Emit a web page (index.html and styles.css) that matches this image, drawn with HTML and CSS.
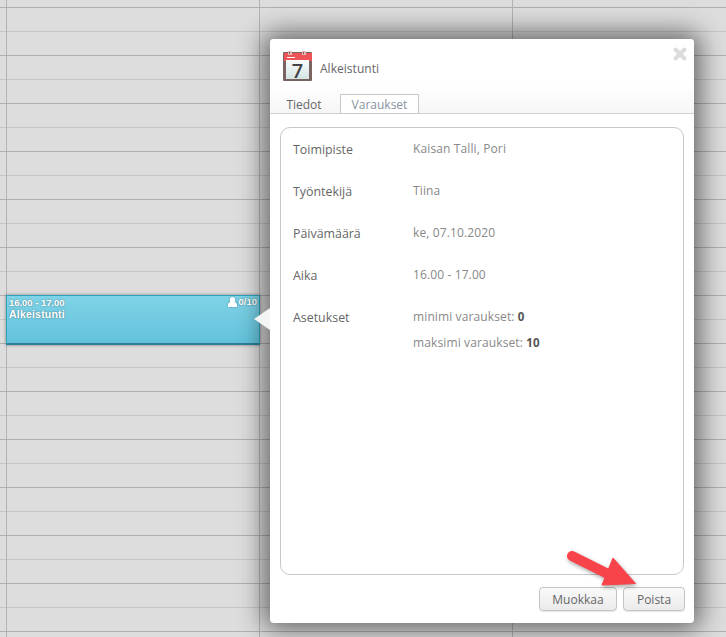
FILE: index.html
```html
<!DOCTYPE html>
<html lang="fi">
<head>
<meta charset="utf-8">
<title>Alkeistunti</title>
<link rel="stylesheet" href="styles.css">
</head>
<body>
<div class="calendar">
  <div class="event">
    <div class="event-top">
      <span class="event-time">16.00 - 17.00</span>
      <span class="event-count">
        <svg class="person" viewBox="0 0 9 10" width="9" height="10"><ellipse cx="4.5" cy="3" rx="2.7" ry="3" fill="#fff"/><path d="M0 10V7.6C0 6.4 1.4 5.6 2.6 4.6H6.4C7.6 5.6 9 6.4 9 7.6V10Z" fill="#fff"/></svg>0/10</span>
    </div>
    <div class="event-title">Alkeistunti</div>
  </div>
  <div class="dialog">
    <div class="pointer"></div>
    <div class="dialog-head">
      <svg class="close" viewBox="0 0 14 14" width="14" height="14"><path d="M2.5 2.5L11.5 11.5M11.5 2.5L2.5 11.5" stroke="#dcdcdc" stroke-width="4" stroke-linecap="round"/></svg>
      <div class="title-row">
        <svg class="cal-icon" viewBox="0 0 30 30" width="30" height="30">
          <defs>
            <linearGradient id="page" x1="0" y1="0" x2="0" y2="1"><stop offset="0" stop-color="#fbfdfc"/><stop offset="1" stop-color="#d3e5e4"/></linearGradient>
          </defs>
          <rect x="0" y="1" width="29" height="29" fill="#7a6462" rx="1"/>
          <rect x="1" y="2" width="28" height="8" fill="#ee5358"/>
          <rect x="3" y="9" width="23" height="19" fill="url(#page)"/>
          <rect x="5" y="0" width="4" height="4" fill="#e0bcb9"/>
          <rect x="6" y="1" width="1" height="2" fill="#8a5554"/>
          <rect x="19" y="0" width="4" height="4" fill="#e0bcb9"/>
          <rect x="20" y="1" width="1" height="2" fill="#8a5554"/>
          <rect x="4" y="6" width="8" height="1" fill="#fff"/>
          <text x="14.5" y="27" class="cal-day">7</text>
        </svg>
        <span class="title">Alkeistunti</span>
      </div>
      <div class="tabs">
        <span class="tab tab-active">Tiedot</span>
        <span class="tab tab-other">Varaukset</span>
      </div>
    </div>
    <div class="panel">
      <div class="row"><div class="label">Toimipiste</div><div class="value">Kaisan Talli, Pori</div></div>
      <div class="row"><div class="label">Työntekijä</div><div class="value">Tiina</div></div>
      <div class="row"><div class="label">Päivämäärä</div><div class="value">ke, 07.10.2020</div></div>
      <div class="row"><div class="label">Aika</div><div class="value">16.00 - 17.00</div></div>
      <div class="row"><div class="label">Asetukset</div>
        <div class="value value-stack">
          <div>minimi varaukset: <b>0</b></div>
          <div>maksimi varaukset: <b>10</b></div>
        </div>
      </div>
    </div>
    <div class="actions">
      <button class="btn btn-edit">Muokkaa</button>
      <button class="btn btn-delete">Poista</button>
    </div>
  </div>
  <svg class="arrow" viewBox="0 0 80 46" width="80" height="46">
    <path d="M8 6L44 24" stroke="#f8434a" stroke-width="10" stroke-linecap="round" fill="none"/>
    <path d="M49 8L71.5 33.5L38 35Z" fill="#f8434a" stroke="#f8434a" stroke-width="1" stroke-linejoin="round"/>
  </svg>
</div>
</body>
</html>
```
FILE: styles.css
```css
* { box-sizing: border-box; }
html, body { margin: 0; padding: 0; height: 100%; }
body { overflow: hidden; font-family: "Open Sans", sans-serif; color: #666; }
.calendar {
  position: relative;
  width: 726px;
  height: 637px;
  overflow: hidden;
  background-color: #dddddd;
  background-image:
    linear-gradient(90deg, transparent 6px, #b2b2b2 6px, #b2b2b2 7px, transparent 7px),
    repeating-linear-gradient(180deg, transparent 0, transparent 7px, #b0b0b0 7px, #b0b0b0 8px, transparent 8px, transparent 31px, #c6c6c6 31px, #c6c6c6 32px, transparent 32px, transparent 48px);
  background-size: 253px 100%, 100% 100%;
  background-repeat: repeat-x, repeat;
}
.event {
  position: absolute;
  left: 6px;
  top: 295px;
  width: 254px;
  height: 50px;
  padding: 1px 2px;
  border: 1px solid #2fa3bd;
  border-bottom: 2px solid #2d8094;
  background: linear-gradient(180deg, #7fd3e7, #63c2db);
  box-shadow: 0 0 3px rgba(0,0,0,.45);
  color: #fff;
  font-family: "Liberation Sans", Arial, sans-serif;
  font-size: 10px;
  font-weight: bold;
  line-height: 11px;
  text-shadow: 0 0 2px rgba(0,0,0,.45);
}
.event-top { display: flex; justify-content: space-between; }
.event-time { font-size: 9.5px; line-height: 12px; letter-spacing: -.03px; }
.event-count { display: flex; align-items: center; gap: 2px; font-size: 9.5px; line-height: 10px; height: 10px; }
.person { filter: drop-shadow(0 0 1px rgba(0,0,0,.3)); }
.event-title { font-size: 10.5px; line-height: 10px; letter-spacing: .2px; }
.dialog {
  position: absolute;
  left: 270px;
  top: 39px;
  width: 424px;
  height: 584px;
  display: flex;
  flex-direction: column;
  background: #fff;
  border-radius: 4px;
  box-shadow: 0 0 26px 6px rgba(0,0,0,.55);
}
.pointer {
  position: absolute;
  left: -16px;
  top: 269px;
  width: 0;
  height: 0;
  border-style: solid;
  border-width: 11px 16px 11px 0;
  border-color: transparent #f4f4f4 transparent transparent;
}
.dialog-head {
  position: relative;
  height: 75px;
  flex: none;
  display: flex;
  flex-direction: column;
  justify-content: space-between;
  padding-top: 12px;
  background: linear-gradient(180deg, #fff 60%, #f6f6f6);
  border-bottom: 1px solid #d2d2d2;
  border-radius: 4px 4px 0 0;
}
.close { position: absolute; right: 7px; top: 8px; }
.title-row { display: flex; align-items: center; gap: 7px; padding-left: 13px; }
.cal-icon { overflow: visible; }
.cal-day { font-family: "Open Sans", sans-serif; font-size: 20px; font-weight: 600; fill: #444; text-anchor: middle; }
.title { font-size: 12px; color: #666; position: relative; top: 2px; letter-spacing: .03px; }
.tabs { display: flex; height: 20px; margin-bottom: -1px; }
.tab { font-size: 12px; line-height: 21px; height: 20px; }
.tab-active { width: 70px; padding-right: 2px; text-align: center; color: #666; }
.tab-other { width: 79px; text-align: center; color: #8893a0; background: #fff; border: 1px solid #c8c8c8; line-height: 20px; }
.panel {
  flex: 1;
  margin: 13px 10px 0;
  padding: 8px 12px 6px;
  border: 1px solid #c8c8c8;
  border-radius: 10px;
  background: #fff;
}
.row { display: flex; min-height: 42px; align-items: flex-start; }
.label { width: 120px; font-size: 12.4px; line-height: 28px; color: #666; }
.value { font-size: 12px; line-height: 26px; color: #888; letter-spacing: .12px; }
.value-stack div { height: 26px; }
.value b { color: #555; font-size: 11.5px; }
.actions { display: flex; justify-content: flex-end; gap: 6px; padding: 12px 9px 12px 0; flex: none; }
.btn {
  height: 24px;
  padding: 0;
  font-family: "Open Sans", sans-serif;
  font-size: 12px;
  color: #666;
  background: linear-gradient(180deg, #fafafa, #ebebeb);
  border: 1px solid #c4c4c4;
  border-radius: 4px;
  box-shadow: 0 1px 1px rgba(0,0,0,.1);
}
.btn-edit { width: 78px; }
.btn-delete { width: 62px; }
.arrow {
  position: absolute;
  left: 564px;
  top: 550px;
  filter: drop-shadow(1px 2px 2px rgba(0,0,0,.35));
}
```
